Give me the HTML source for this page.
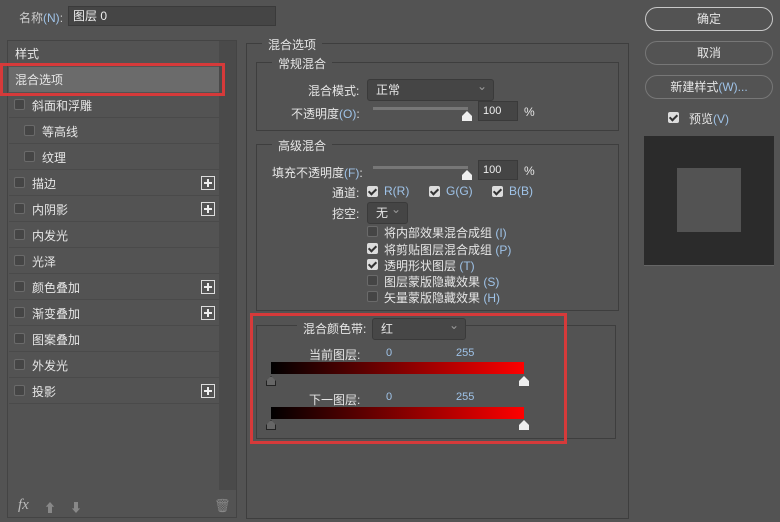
<!DOCTYPE html>
<html><head><meta charset="utf-8"><style>
*{box-sizing:border-box;margin:0;padding:0}
body{width:780px;height:522px;background:#535353;position:relative;overflow:hidden;font-family:"Liberation Sans","Noto Sans CJK SC",sans-serif;font-size:12px;color:#e6e6e6}
.a{position:absolute;white-space:nowrap}
.b{color:#9fc3e8}
.cb{position:absolute;width:11px;height:11px;border:1px solid #6a6a6a;background:#454545;border-radius:2px}
.ck{position:absolute;width:11px;height:11px;background:#dcdcdc;border-radius:2px}
.ck:after{content:"";position:absolute;left:3px;top:1px;width:3px;height:6px;border:solid #333;border-width:0 2px 2px 0;transform:rotate(45deg)}
.row{position:absolute;left:9px;width:210px;height:26px;border-bottom:1px solid #4a4a4a}
.row span{position:absolute;top:5px}
.plus{position:absolute;right:4px;top:6px;width:14px;height:14px;border:1px solid #ddd}
.plus:before{content:"";position:absolute;left:2px;top:5px;width:8px;height:2px;background:#eee}
.plus:after{content:"";position:absolute;left:5px;top:2px;width:2px;height:8px;background:#eee}
.grp{position:absolute;border:1px solid #3e3e3e}
.leg{position:absolute;background:#535353;padding:0 6px}
.btn{position:absolute;left:645px;width:128px;height:24px;border:1px solid #777;border-radius:12px;text-align:center;line-height:22px;font-size:12px}
.inp{position:absolute;background:#454545;border:1px solid #3a3a3a;color:#eee;padding-left:4px;font-size:11px}
.sl{position:absolute;height:3px;background:#777}
.th{position:absolute;width:10px;height:10px;background:#eee;clip-path:polygon(50% 0,100% 50%,100% 100%,0 100%,0 50%)}
.th2{position:absolute;width:10px;height:10px;background:#666;border:1px solid #222;clip-path:polygon(50% 0,100% 50%,100% 100%,0 100%,0 50%)}
.grad{position:absolute;left:271px;width:253px;height:12px;background:linear-gradient(to right,#000,#ff0000)}
.dd{position:absolute;background:#454545;border:1px solid #3a3a3a;border-radius:3px;padding-left:8px;line-height:20px}
.dd:after{content:"⌄";position:absolute;right:6px;top:-4px;color:#999}
</style></head><body>
<div class="a" style="left:19px;top:9px;color:#ccc">名称<span class="b">(N)</span>:</div>
<div class="inp" style="left:68px;top:6px;width:208px;height:20px;line-height:18px;font-size:12px">图层 0</div>

<div class="a" style="left:7px;top:40px;width:230px;height:478px;border:1px solid #444"></div>
<div class="a" style="left:219px;top:41px;width:17px;height:449px;background:#4a4a4a"></div>
<div class="a" style="left:15px;top:45px">样式</div>
<div class="a" style="left:9px;top:67px;width:210px;height:25px;background:#6b6b6b"></div>
<div class="a" style="left:15px;top:71px">混合选项</div>
<div class="a" style="left:0;top:63px;width:225px;height:33px;border:3px solid #d63a3a"></div>
<div class="row" style="top:92px"><div class="cb" style="left:5px;top:7px"></div><span style="left:23px">斜面和浮雕</span></div>
<div class="row" style="top:118px"><div class="cb" style="left:15px;top:7px"></div><span style="left:33px">等高线</span></div>
<div class="row" style="top:144px"><div class="cb" style="left:15px;top:7px"></div><span style="left:33px">纹理</span></div>
<div class="row" style="top:170px"><div class="cb" style="left:5px;top:7px"></div><span style="left:23px">描边</span><div class="plus"></div></div>
<div class="row" style="top:196px"><div class="cb" style="left:5px;top:7px"></div><span style="left:23px">内阴影</span><div class="plus"></div></div>
<div class="row" style="top:222px"><div class="cb" style="left:5px;top:7px"></div><span style="left:23px">内发光</span></div>
<div class="row" style="top:248px"><div class="cb" style="left:5px;top:7px"></div><span style="left:23px">光泽</span></div>
<div class="row" style="top:274px"><div class="cb" style="left:5px;top:7px"></div><span style="left:23px">颜色叠加</span><div class="plus"></div></div>
<div class="row" style="top:300px"><div class="cb" style="left:5px;top:7px"></div><span style="left:23px">渐变叠加</span><div class="plus"></div></div>
<div class="row" style="top:326px"><div class="cb" style="left:5px;top:7px"></div><span style="left:23px">图案叠加</span></div>
<div class="row" style="top:352px"><div class="cb" style="left:5px;top:7px"></div><span style="left:23px">外发光</span></div>
<div class="row" style="top:378px"><div class="cb" style="left:5px;top:7px"></div><span style="left:23px">投影</span><div class="plus"></div></div>
<div class="a" style="left:18px;top:497px;font-style:italic;font-family:'Liberation Serif',serif;font-size:15px;color:#bbb">fx</div>
<div class="a" style="left:44px;top:499px;color:#888;font-size:12px">⬆</div>
<div class="a" style="left:70px;top:499px;color:#888;font-size:12px">⬇</div>
<div class="a" style="left:214px;top:498px;color:#888;font-size:13px">🗑</div>

<div class="grp" style="left:246px;top:43px;width:383px;height:476px"></div>
<div class="leg a" style="left:262px;top:36px">混合选项</div>
<div class="grp" style="left:256px;top:62px;width:363px;height:69px"></div>
<div class="leg a" style="left:272px;top:55px">常规混合</div>
<div class="a" style="left:308px;top:82px">混合模式:</div>
<div class="dd" style="left:367px;top:79px;width:127px;height:22px">正常</div>
<div class="a" style="left:291px;top:105px">不透明度<span class="b">(O)</span>:</div>
<div class="sl" style="left:373px;top:107px;width:95px"></div><div class="th" style="left:462px;top:111px"></div>
<div class="inp" style="left:478px;top:101px;width:40px;height:20px;line-height:18px">100</div>
<div class="a" style="left:524px;top:105px">%</div>

<div class="grp" style="left:256px;top:144px;width:363px;height:167px"></div>
<div class="leg a" style="left:272px;top:137px">高级混合</div>
<div class="a" style="left:272px;top:164px">填充不透明度<span class="b">(F)</span>:</div>
<div class="sl" style="left:373px;top:166px;width:95px"></div><div class="th" style="left:462px;top:170px"></div>
<div class="inp" style="left:478px;top:160px;width:40px;height:20px;line-height:18px">100</div>
<div class="a" style="left:524px;top:164px">%</div>
<div class="a" style="left:332px;top:184px">通道:</div>
<div class="ck" style="left:367px;top:186px"></div><div class="a b" style="left:384px;top:184px">R(R)</div>
<div class="ck" style="left:429px;top:186px"></div><div class="a b" style="left:446px;top:184px">G(G)</div>
<div class="ck" style="left:492px;top:186px"></div><div class="a b" style="left:509px;top:184px">B(B)</div>
<div class="a" style="left:332px;top:205px">挖空:</div>
<div class="dd" style="left:367px;top:202px;width:41px;height:22px">无</div>
<div class="cb" style="left:367px;top:226px"></div><div class="a" style="left:384px;top:224px">将内部效果混合成组 <span class="b">(I)</span></div>
<div class="ck" style="left:367px;top:243px"></div><div class="a" style="left:384px;top:241px">将剪贴图层混合成组 <span class="b">(P)</span></div>
<div class="ck" style="left:367px;top:259px"></div><div class="a" style="left:384px;top:257px">透明形状图层 <span class="b">(T)</span></div>
<div class="cb" style="left:367px;top:275px"></div><div class="a" style="left:384px;top:273px">图层蒙版隐藏效果 <span class="b">(S)</span></div>
<div class="cb" style="left:367px;top:291px"></div><div class="a" style="left:384px;top:289px">矢量蒙版隐藏效果 <span class="b">(H)</span></div>

<div class="grp" style="left:256px;top:325px;width:360px;height:114px"></div>
<div class="leg a" style="left:297px;top:320px">混合颜色带:</div>
<div class="dd" style="left:372px;top:318px;width:94px;height:22px;background:#474747">红</div>
<div class="a" style="left:309px;top:346px">当前图层:</div>
<div class="a b" style="left:386px;top:347px;font-size:11px">0</div>
<div class="a b" style="left:456px;top:347px;font-size:11px">255</div>
<div class="grad" style="top:362px"></div>
<div class="th2" style="left:266px;top:376px"></div><div class="th" style="left:519px;top:376px"></div>
<div class="a" style="left:309px;top:391px">下一图层:</div>
<div class="a b" style="left:386px;top:391px;font-size:11px">0</div>
<div class="a b" style="left:456px;top:391px;font-size:11px">255</div>
<div class="grad" style="top:407px"></div>
<div class="th2" style="left:266px;top:420px"></div><div class="th" style="left:519px;top:420px"></div>
<div class="a" style="left:250px;top:313px;width:317px;height:131px;border:3px solid #d63a3a"></div>

<div class="btn" style="top:7px;border-color:#c8c8c8;border-width:1.5px">确定</div>
<div class="btn" style="top:41px">取消</div>
<div class="btn" style="top:75px">新建样式<span class="b">(W)...</span></div>
<div class="ck" style="left:668px;top:112px"></div><div class="a" style="left:689px;top:110px">预览<span class="b">(V)</span></div>
<div class="a" style="left:644px;top:136px;width:130px;height:130px;background:#2b2b2b;border-bottom:1px solid #666"></div>
<div class="a" style="left:677px;top:168px;width:64px;height:64px;background:#535353"></div>
</body></html>
